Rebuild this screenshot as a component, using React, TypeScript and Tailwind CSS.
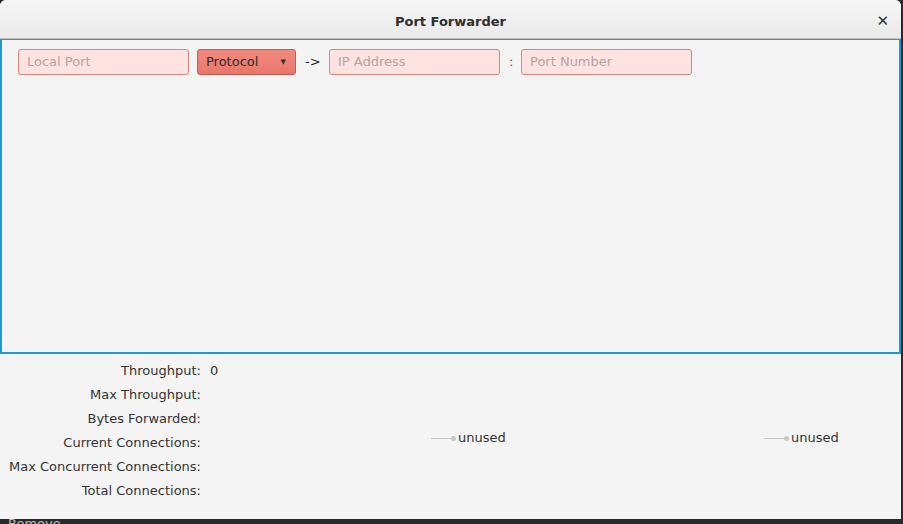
const labels = [
  "Throughput:",
  "Max Throughput:",
  "Bytes Forwarded:",
  "Current Connections:",
  "Max Concurrent Connections:",
  "Total Connections:",
];

function Field({ placeholder }: { placeholder: string }) {
  return (
    <div className="w-[171px] h-[26px] rounded-[3px] border border-[#d9837b] bg-[#ffe3e0] px-[8px] flex items-center text-[13px] text-[#b4a3a3]">
      {placeholder}
    </div>
  );
}

function Unused() {
  return (
    <div className="flex items-center">
      <div className="w-[20px] h-px bg-[#c8c8c8]" />
      <div className="w-[5px] h-[5px] rounded-full bg-[#c8c8c8]" />
      <span className="ml-[2px] text-[13px] text-[#333]">unused</span>
    </div>
  );
}

export default function App() {
  return (
    <div
      className="w-[903px] h-[524px] bg-[#2a2a2a] overflow-hidden relative"
      style={{ fontFamily: '"DejaVu Sans", sans-serif' }}
    >
      <div className="w-[901px] h-[519px] bg-[#f4f4f4] rounded-t-[6px] flex flex-col">
        {/* title bar */}
        <div className="h-[39px] shrink-0 rounded-t-[6px] bg-gradient-to-b from-[#f7f7f7] to-[#e9e9e9] border-b border-[#c4c4c4] flex items-center justify-center relative">
          <span className="text-[13px] font-bold text-[#2e2e2e] pt-[6px]">Port Forwarder</span>
          <span className="absolute right-[12px] top-[14px] text-[15px] font-bold text-[#333] leading-none">✕</span>
        </div>

        {/* rules panel */}
        <div className="h-[315px] shrink-0 border-2 border-t-[1px] border-[#1b9ad3] px-[16px] pt-[9px]">
          <div className="flex items-center">
            <Field placeholder="Local Port" />
            <div className="ml-[8px] w-[99px] h-[26px] rounded-[3px] border border-[#c9574d] bg-gradient-to-b from-[#f28a7f] to-[#e8776b] flex items-center justify-between pl-[8px] pr-[9px] text-[13px] text-[#2b2b2b]">
              <span>Protocol</span>
              <span className="text-[7px] text-[#333]">▼</span>
            </div>
            <span className="ml-[9px] w-[24px] text-[13px] text-[#1a1a3a]">-&gt;</span>
            <Field placeholder="IP Address" />
            <span className="ml-[9px] w-[12px] text-[13px] text-[#666]">:</span>
            <Field placeholder="Port Number" />
          </div>
        </div>

        {/* stats */}
        <div className="flex pt-[5px]">
          <div className="w-[201px] flex flex-col items-end">
            {labels.map((l) => (
              <div key={l} className="h-[24px] flex items-center text-[13px] text-[#333] whitespace-nowrap">
                {l}
              </div>
            ))}
          </div>
          <div className="w-[230px] pl-[9px]">
            <div className="h-[24px] flex items-center text-[13px] text-[#333]">0</div>
          </div>
          <div className="flex-1 flex pt-[67px]">
            <div className="w-[333px] h-[24px] flex items-center">
              <Unused />
            </div>
            <div className="h-[24px] flex items-center">
              <Unused />
            </div>
          </div>
        </div>
      </div>
      <div className="absolute left-[8px] top-[514px] text-[13px] text-[#bdbdbd]">Remove</div>
    </div>
  );
}
